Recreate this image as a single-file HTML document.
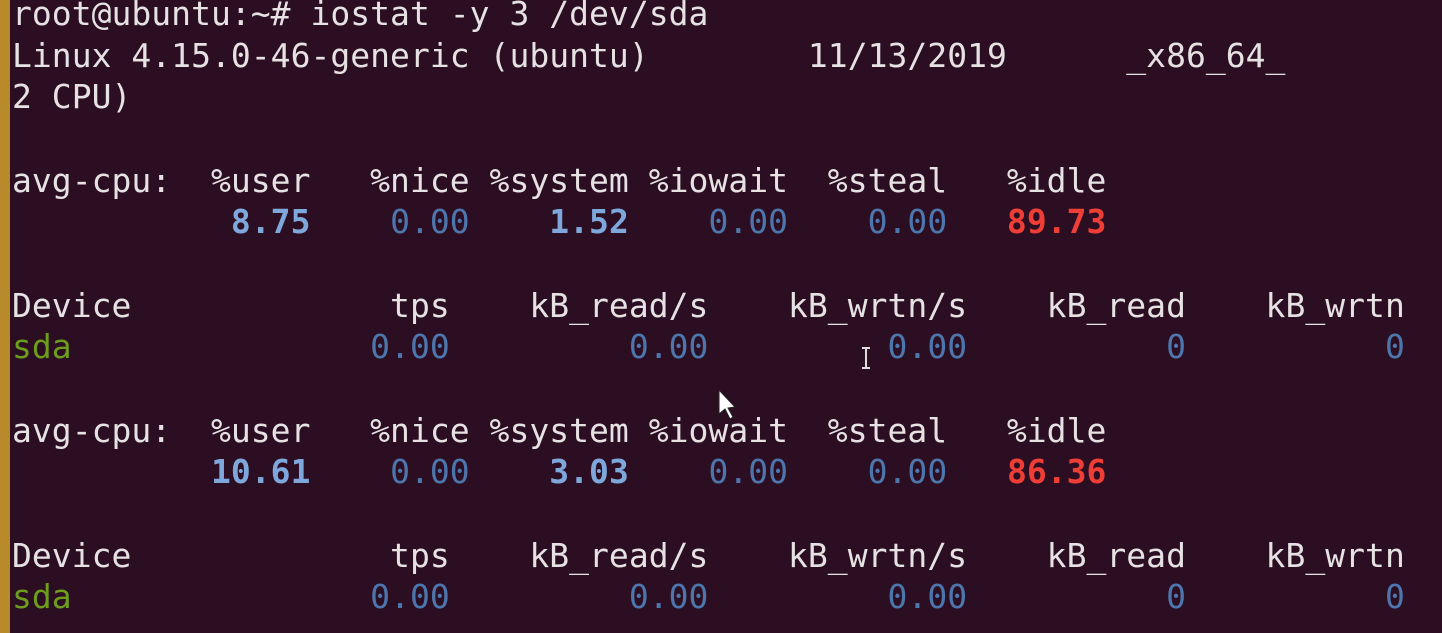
<!DOCTYPE html>
<html><head><meta charset="utf-8"><style>
html,body{margin:0;padding:0;width:1442px;height:633px;overflow:hidden;background:#2c0e22;}
.strip{position:absolute;left:0;top:0;width:10px;height:633px;background:#b98a2c;}
pre{position:absolute;left:12px;top:-7px;margin:0;font-family:"DejaVu Sans Mono","Liberation Mono",monospace;font-size:33px;line-height:41.65px;color:#e6e2e4;letter-spacing:0.03px;}
.b{color:#7ea8dc;font-weight:bold}
.n{color:#4d76ad}
.r{color:#ef3e36;font-weight:bold}
.g{color:#6d9d1c}
</style></head><body>
<div class="strip"></div>
<pre>root@ubuntu:~# iostat -y 3 /dev/sda
Linux 4.15.0-46-generic (ubuntu)        11/13/2019      _x86_64_
2 CPU)

avg-cpu:  %user   %nice %system %iowait  %steal   %idle
           <span class="b">8.75</span>    <span class="n">0.00</span>    <span class="b">1.52</span>    <span class="n">0.00</span>    <span class="n">0.00</span>   <span class="r">89.73</span>

Device             tps    kB_read/s    kB_wrtn/s    kB_read    kB_wrtn
<span class="g">sda</span>               <span class="n">0.00</span>         <span class="n">0.00</span>         <span class="n">0.00</span>          <span class="n">0</span>          <span class="n">0</span>

avg-cpu:  %user   %nice %system %iowait  %steal   %idle
          <span class="b">10.61</span>    <span class="n">0.00</span>    <span class="b">3.03</span>    <span class="n">0.00</span>    <span class="n">0.00</span>   <span class="r">86.36</span>

Device             tps    kB_read/s    kB_wrtn/s    kB_read    kB_wrtn
<span class="g">sda</span>               <span class="n">0.00</span>         <span class="n">0.00</span>         <span class="n">0.00</span>          <span class="n">0</span>          <span class="n">0</span>
</pre>
<svg style="position:absolute;left:0;top:0" width="1442" height="633">
<path d="M719 390 L719 414 L725 409 L730 419 L733 417 L728 408 L735 407 Z" fill="#fff" stroke="#222" stroke-width="1"/>
<path d="M862 348 H870 M866 348 V368 M862 368 H870" stroke="#ddd" stroke-width="2" fill="none"/>
</svg>
</body></html>
